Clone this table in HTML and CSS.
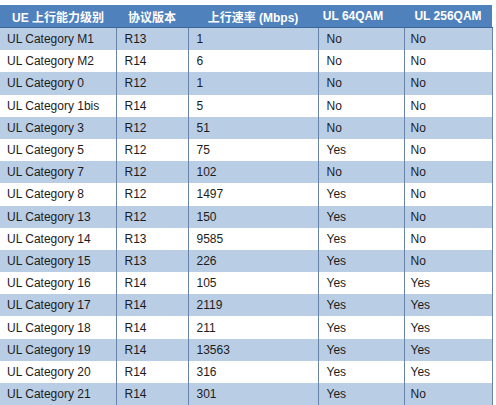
FILE: index.html
```html
<!DOCTYPE html>
<html lang="zh">
<head>
<meta charset="utf-8">
<title>UL Category</title>
<link rel="stylesheet" href="styles.css">
</head>
<body>
<table class="cat">
<colgroup>
<col class="c1"><col class="c2"><col class="c3"><col class="c4"><col class="c5">
</colgroup>
<thead>
<tr><th>UE 上行能力级别</th><th>协议版本</th><th>上行速率 (Mbps)</th><th class="h4">UL 64QAM</th><th>UL 256QAM</th></tr>
</thead>
<tbody>
<tr class="b"><td>UL Category M1</td><td>R13</td><td>1</td><td>No</td><td>No</td></tr>
<tr><td>UL Category M2</td><td>R14</td><td>6</td><td>No</td><td>No</td></tr>
<tr class="b"><td>UL Category 0</td><td>R12</td><td>1</td><td>No</td><td>No</td></tr>
<tr><td>UL Category 1bis</td><td>R14</td><td>5</td><td>No</td><td>No</td></tr>
<tr class="b"><td>UL Category 3</td><td>R12</td><td>51</td><td>No</td><td>No</td></tr>
<tr><td>UL Category 5</td><td>R12</td><td>75</td><td>Yes</td><td>No</td></tr>
<tr class="b"><td>UL Category 7</td><td>R12</td><td>102</td><td>No</td><td>No</td></tr>
<tr><td>UL Category 8</td><td>R12</td><td>1497</td><td>Yes</td><td>No</td></tr>
<tr class="b"><td>UL Category 13</td><td>R12</td><td>150</td><td>Yes</td><td>No</td></tr>
<tr><td>UL Category 14</td><td>R13</td><td>9585</td><td>Yes</td><td>No</td></tr>
<tr class="b"><td>UL Category 15</td><td>R13</td><td>226</td><td>Yes</td><td>No</td></tr>
<tr><td>UL Category 16</td><td>R14</td><td>105</td><td>Yes</td><td>Yes</td></tr>
<tr class="b"><td>UL Category 17</td><td>R14</td><td>2119</td><td>Yes</td><td>Yes</td></tr>
<tr><td>UL Category 18</td><td>R14</td><td>211</td><td>Yes</td><td>Yes</td></tr>
<tr class="b"><td>UL Category 19</td><td>R14</td><td>13563</td><td>Yes</td><td>Yes</td></tr>
<tr><td>UL Category 20</td><td>R14</td><td>316</td><td>Yes</td><td>Yes</td></tr>
<tr class="b"><td>UL Category 21</td><td>R14</td><td>301</td><td>Yes</td><td>No</td></tr>
</tbody>
</table>
</body>
</html>
```

FILE: styles.css
```css
html, body {
  margin: 0;
  padding: 0;
  background: #ffffff;
}
body {
  padding-top: 5px;
  font-family: "Liberation Sans", Arial, "Noto Sans CJK SC", sans-serif;
}
.cat {
  border-collapse: collapse;
  table-layout: fixed;
  width: 492px;
  font-size: 12px;
  color: #1c1c1c;
}
.c1 { width: 116px; }
.c2 { width: 72px; }
.c3 { width: 130px; }
.c4 { width: 86px; }
.c5 { width: 88px; }
.cat th {
  background: #4f81bd;
  color: #ffffff;
  font-weight: bold;
  height: 22px;
  padding: 0;
  text-align: center;
  border-bottom: 1px solid #3d6796;
  white-space: nowrap;
  font-family: "Liberation Sans", Arial, "Noto Sans CJK SC", sans-serif;
}
.cat th.h4 {
  padding-right: 16px;
}
.cat td {
  height: 22.2px;
  padding: 0 0 0 8px;
  border-left: 1px solid #6884aa;
  white-space: nowrap;
}
.cat td:first-child {
  border-left: none;
  padding-left: 7px;
}
.cat td:last-child {
  border-right: 1px solid #6884aa;
  padding-left: 6px;
}
.cat tr.b td {
  background: #b9cde5;
}
.cat tbody tr:last-child td {
  border-bottom: 1px solid #6884aa;
}
```
